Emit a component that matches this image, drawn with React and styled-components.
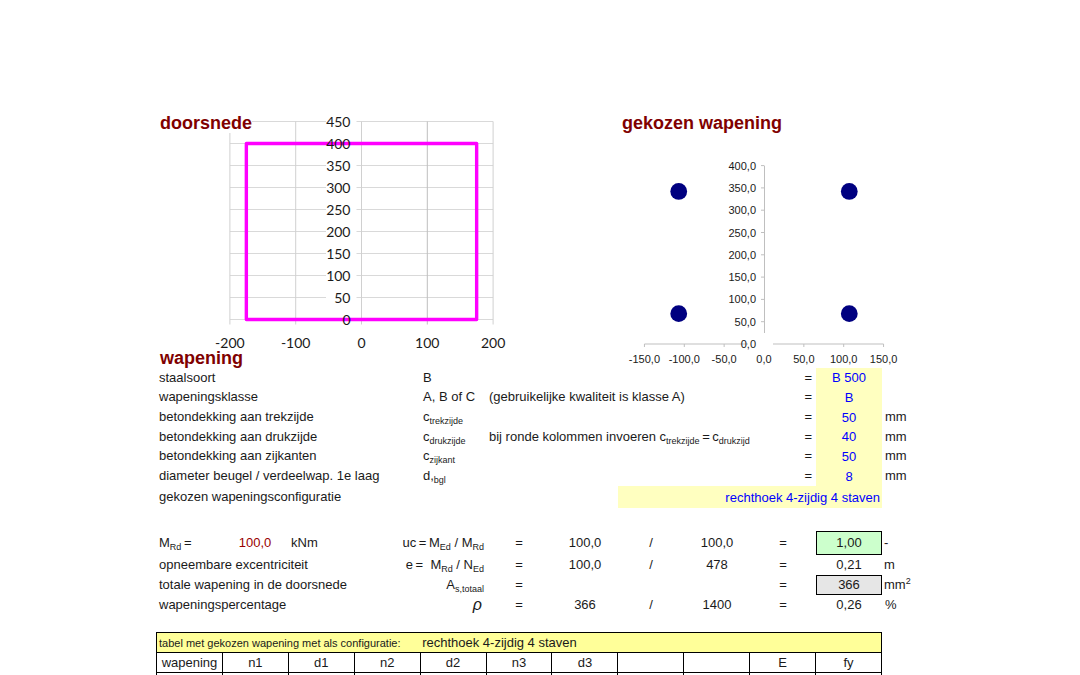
import styled, { createGlobalStyle } from 'styled-components';

const GlobalStyle = createGlobalStyle`
  * {
    box-sizing: border-box;
  }

  body {
    margin: 0;
    background: #fff;
    color: #1a1a1a;
    font-family: "Liberation Sans", Arial, sans-serif;
    font-size: 13px;
    line-height: 16px;
  }

  sub, sup {
    font-size: 9px;
    line-height: 0;
  }

  sub {
    vertical-align: -3px;
  }
`

const Sheet = styled.main`
  height: 100vh;
  overflow: hidden;
  padding: 113px 132px 0 156px;
`

const Charts = styled.section`
  display: grid;
  grid-template-columns: repeat(12, minmax(0, 1fr));
  grid-template-rows: auto 20px;
`

const Figure = styled.figure`
  display: grid;
  margin: 0;
  grid-column: ${props => props.$columns};
  grid-row: ${props => props.$rows};
  align-items: start;
`

const Plot = styled.svg`
  grid-area: 1 / 1;
  display: block;
  width: 100%;
  overflow: visible;
`

const Title = styled.h2`
  grid-area: 1 / 1;
  justify-self: start;
  z-index: 1;
  margin: 0;
  padding: 0 0 0 4px;
  background: #fff;
  color: #800000;
  font-size: 18px;
  line-height: 20px;
  white-space: nowrap;
`

const SectionTitle = styled(Title)`
  grid-area: 2 / 1 / 3 / 5;
  background: none;
`

const TickText = styled.text`
  font-family: ${props => props.$large ? 'Lato, sans-serif' : '"Liberation Sans", sans-serif'};
  font-size: ${props => props.$large ? 14 : 11}px;
  fill: #1a1a1a;
  text-anchor: ${props => props.$anchor || 'middle'};
  dominant-baseline: central;
`

const Params = styled.section`
  display: grid;
  grid-auto-rows: 1fr;
  min-height: 118px;
`

const ParamRow = styled.div`
  display: grid;
  grid-template-columns: repeat(12, minmax(0, 1fr));
  align-items: center;
  white-space: nowrap;
`

const ConfigRow = styled(ParamRow)`
  min-height: 22px;
`

const Label = styled.label`
  grid-column: 1 / 5;
  padding-left: 3px;
`

const Cell = styled.span`
  grid-column: ${props => props.$column};
  padding: 0 4px 0 3px;
  text-align: ${props => props.$align || 'left'};
`

const ValueInput = styled.input`
  grid-column: ${props => props.$wide ? '8 / 12' : '11 / 12'};
  align-self: stretch;
  min-width: 0;
  width: 100%;
  height: 100%;
  margin: 0;
  padding: 0 ${props => props.$wide ? 2 : 0}px;
  border: 0;
  border-radius: 0;
  background: #ffffc0;
  color: #0000ff;
  font: inherit;
  text-align: ${props => props.$wide ? 'right' : 'center'};
`

const Results = styled.table`
  width: 100%;
  margin-top: 23px;
  table-layout: fixed;
  border-spacing: 0;

  th, td {
    height: 20px;
    padding: 0;
    font-weight: normal;
    text-align: center;
    white-space: nowrap;
  }

  tr:first-child > * {
    height: 24px;
  }

  th {
    padding-left: 3px;
    text-align: left;
  }
`

const SymbolCell = styled.td`
  && {
    padding-right: 2px;
    text-align: right;
  }
`

const UnitCell = styled.td`
  && {
    padding-left: ${props => props.$inset ? 3 : 2}px;
    text-align: left;
  }
`

const Total = styled.td`
  border: ${props => props.$fill ? '1px solid #000' : 0};
  background: ${props => props.$fill || 'transparent'};
`

const Moment = styled.span`
  color: #990000;
`

const Rho = styled.i`
  padding-right: 2px;
  font-size: 16px;
  line-height: 16px;
`

const BarTable = styled.table`
  width: calc(100% * 11 / 12);
  margin-top: 17px;
  table-layout: fixed;
  border-collapse: collapse;

  th, td {
    height: 20px;
    padding: 0;
    border: 1px solid #000;
    font-weight: normal;
    text-align: center;
    white-space: nowrap;
  }
`

const CaptionCell = styled.th`
  && {
    padding-left: 2px;
    border-left-width: ${props => props.$first ? 1 : 0}px;
    border-right-width: ${props => props.$first ? 0 : 1}px;
    background: #ffff99;
    font-size: ${props => props.$first ? 11 : 13}px;
    text-align: left;
  }
`

const range = (from, to, step) => {
  const values = []
  for (let v = from; v <= to; v += step) values.push(v)
  return values
}

const decimal = v => v.toFixed(1).replace('.', ',')

const SectionPlot = () => {
  const x = v => 205.5 + v * 0.658
  const y = v => 206.5 - v * 0.44
  const columns = range(-200, 200, 100)
  const rows = range(0, 450, 50)

  return (
    <Plot viewBox="0 0 396 235" role="img" aria-label="doorsnede">
      {rows.map(v => (
        <path key={v} d={`M${x(-200)} ${y(v)}H170M200.5 ${y(v)}H${x(200)}`} stroke="#d9d9d9"/>
      ))}
      {columns.map(v => (
        <path key={v} d={`M${x(v)} ${y(450)}V${y(0) + 5}`} stroke={v === 100 ? '#bfbfbf' : '#d0d0d0'}/>
      ))}
      <rect
        x={x(-175)}
        y={y(400)}
        width={x(175) - x(-175)}
        height={y(0) - y(400)}
        fill="none"
        stroke="#ff00ff"
        strokeWidth="3.4"
        strokeLinejoin="round"
      />
      {rows.map(v => <TickText key={v} $large $anchor="end" x="194.5" y={y(v) - 0.5}>{v}</TickText>)}
      {columns.map(v => <TickText key={v} $large x={x(v)} y="229">{v}</TickText>)}
    </Plot>
  )
}

const bars = [[-107, 342], [107, 342], [-107, 68], [107, 68]]

const BarsPlot = () => {
  const x = v => 146 + v * 0.797
  const y = v => 231 - v * 0.446
  const columns = range(-150, 150, 50)
  const rows = range(0, 400, 50)

  return (
    <Plot viewBox="0 0 330 255" role="img" aria-label="gekozen wapening">
      <g fill="none" stroke="#bfbfbf">
        <path d={`M${x(0) + 0.5} ${y(400)}V220M${x(-150)} ${y(0)}H130M155 ${y(0)}H${x(150)}`}/>
        {rows.slice(1).map(v => <path key={v} d={`M${x(0) - 3} ${y(v)}h3`}/>)}
        {columns.filter(v => v !== 0).map(v => <path key={v} d={`M${x(v)} ${y(0)}v3`}/>)}
      </g>
      {bars.map(([bx, by]) => <circle key={`${bx} ${by}`} cx={x(bx)} cy={y(by)} r="8.4" fill="#000080"/>)}
      {rows.map(v => <TickText key={v} $anchor="end" x="138" y={y(v)}>{decimal(v)}</TickText>)}
      {columns.map(v => <TickText key={v} x={x(v)} y="246">{decimal(v)}</TickText>)}
    </Plot>
  )
}

const params = [
  { id: 'staalsoort', label: 'staalsoort', symbol: 'B', value: 'B 500' },
  { id: 'klasse', label: 'wapeningsklasse', symbol: 'A, B of C', note: '(gebruikelijke kwaliteit is klasse A)', value: 'B' },
  { id: 'trekzijde', label: 'betondekking aan trekzijde', symbol: <>c<sub>trekzijde</sub></>, value: '50', unit: 'mm' },
  {
    id: 'drukzijde',
    label: 'betondekking aan drukzijde',
    symbol: <>c<sub>drukzijde</sub></>,
    note: <>bij ronde kolommen invoeren c<sub>trekzijde</sub>&#8201;=&#8201;c<sub>drukzijd</sub></>,
    value: '40',
    unit: 'mm',
  },
  { id: 'zijkanten', label: 'betondekking aan zijkanten', symbol: <>c<sub>zijkant</sub></>, value: '50', unit: 'mm' },
  { id: 'beugel', label: 'diameter beugel / verdeelwap. 1e laag', symbol: <>d,<sub>bgl</sub></>, value: '8', unit: 'mm' },
]

const results = [
  {
    label: 'opneembare excentriciteit',
    symbol: <>e&#8201;=&nbsp; M<sub>Rd</sub> / N<sub>Ed</sub></>,
    a: '100,0',
    b: '478',
    total: '0,21',
    unit: 'm',
  },
  {
    label: 'totale wapening in de doorsnede',
    symbol: <>A<sub>s,totaal</sub></>,
    total: '366',
    fill: '#e6e6e6',
    unit: <>mm<sup>2</sup></>,
  },
  { label: 'wapeningspercentage', symbol: <Rho>ρ</Rho>, a: '366', b: '1400', total: '0,26', unit: '%', inset: true },
]

const ResultCells = ({ symbol, a, b, total, fill, unit, inset }) => (
  <>
    <SymbolCell colSpan={2}>{symbol}</SymbolCell>
    <td>=</td>
    <td>{a}</td>
    <td>{a && '/'}</td>
    <td>{b}</td>
    <td>=</td>
    <Total $fill={fill}>{total}</Total>
    <UnitCell $inset={inset}>{unit}</UnitCell>
  </>
)

const barColumns = ['wapening', 'n1', 'd1', 'n2', 'd2', 'n3', 'd3', '', '', 'E', 'fy']

const App = () => (
  <>
    <GlobalStyle/>
    <Sheet>
      <Charts>
        <Figure $columns="1 / 7" $rows="1">
          <Title>doorsnede</Title>
          <SectionPlot/>
        </Figure>
        <Figure $columns="8 / 13" $rows="1 / 3">
          <Title>gekozen wapening</Title>
          <BarsPlot/>
        </Figure>
        <SectionTitle>wapening</SectionTitle>
      </Charts>

      <Params>
        {params.map(({ id, label, symbol, note, value, unit }) => (
          <ParamRow key={id}>
            <Label htmlFor={id}>{label}</Label>
            <Cell $column="5">{symbol}</Cell>
            <Cell $column="6 / 10">{note}</Cell>
            <Cell $column="10" $align="right">=</Cell>
            <ValueInput id={id} defaultValue={value}/>
            <Cell $column="12">{unit}</Cell>
          </ParamRow>
        ))}
      </Params>
      <ConfigRow>
        <Label htmlFor="configuratie">gekozen wapeningsconfiguratie</Label>
        <ValueInput $wide id="configuratie" defaultValue="rechthoek 4-zijdig 4 staven"/>
      </ConfigRow>

      <Results>
        <colgroup>
          {range(1, 12, 1).map(n => <col key={n}/>)}
        </colgroup>
        <tbody>
          <tr>
            <th scope="row">M<sub>Rd</sub>&#8201;=</th>
            <td><Moment>100,0</Moment></td>
            <UnitCell $inset>kNm</UnitCell>
            <ResultCells
              symbol={<>uc&#8201;=&#8201;M<sub>Ed</sub> / M<sub>Rd</sub></>}
              a="100,0"
              b="100,0"
              total="1,00"
              fill="#ccffcc"
              unit="-"
            />
          </tr>
          {results.map(({ label, ...cells }) => (
            <tr key={label}>
              <th scope="row" colSpan={3}>{label}</th>
              <ResultCells {...cells}/>
            </tr>
          ))}
        </tbody>
      </Results>

      <BarTable>
        <colgroup>
          {barColumns.map((name, i) => <col key={i}/>)}
        </colgroup>
        <thead>
          <tr>
            <CaptionCell $first colSpan={4}>tabel met gekozen wapening met als configuratie:</CaptionCell>
            <CaptionCell colSpan={7}>rechthoek 4-zijdig 4 staven</CaptionCell>
          </tr>
          <tr>
            {barColumns.map((name, i) => <th key={i} scope="col">{name}</th>)}
          </tr>
        </thead>
        <tbody>
          <tr>
            {barColumns.map((name, i) => <td key={i}/>)}
          </tr>
        </tbody>
      </BarTable>
    </Sheet>
  </>
)

export default App
